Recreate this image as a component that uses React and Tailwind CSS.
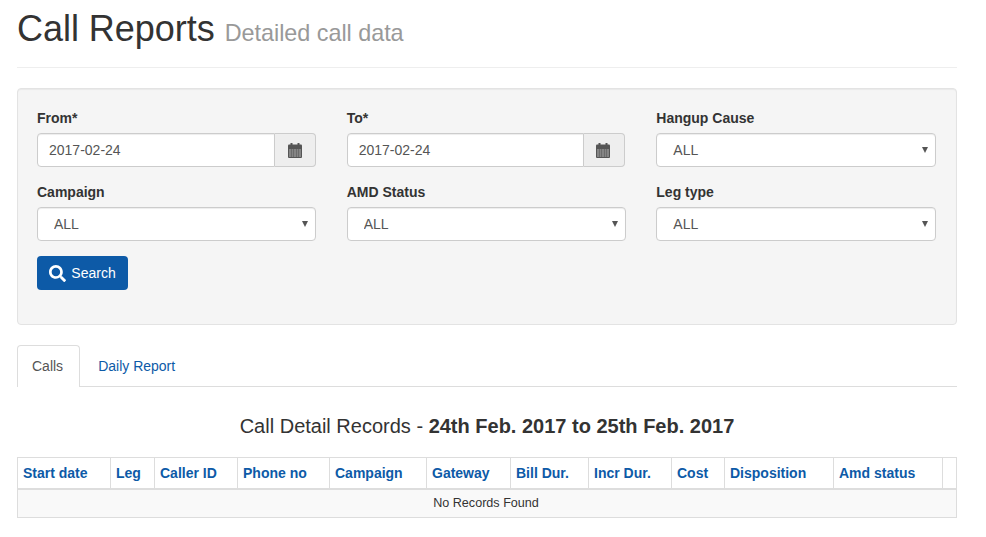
import { FaSearch } from 'react-icons/fa';

const COLUMNS = [
  ['Start date', 93],
  ['Leg', 44],
  ['Caller ID', 83],
  ['Phone no', 92],
  ['Campaign', 97],
  ['Gateway', 84],
  ['Bill Dur.', 78],
  ['Incr Dur.', 83],
  ['Cost', 53],
  ['Disposition', 109],
  ['Amd status', 109],
  ['', 14],
];

const CAL_X = [1, 3.5, 6, 8.5, 11];
const CAL_Y = [6.5, 8.5, 10.5, 12.5];

function CalendarIcon() {
  return (
    <svg width="14" height="15" viewBox="0 0 14 15" fill="#555">
      <rect x="2.500" y="0" width="2" height="3" />
      <rect x="9.500" y="0" width="2" height="3" />
      <rect x="0" y="1.500" width="14" height="13.500" rx="1" />
      {CAL_Y.map((y) =>
        CAL_X.map((x) => <rect key={`${x}-${y}`} x={x} y={y} width="2" height="1" fill="#b5b5b5" />)
      )}
    </svg>
  );
}

function DateField({ label, value, className }) {
  return (
    <div>
      <label className="mb-[5px] block text-sm leading-5 font-bold text-[#333]">{label}</label>
      <div className={`flex h-[34px] ${className}`}>
        <input
          readOnly
          value={value}
          className="h-full min-w-0 flex-1 rounded-l border border-[#ccc] bg-white px-[11px] text-sm text-[#555] shadow-[inset_0_1px_1px_rgba(0,0,0,0.075)] outline-none"
        />
        <span className="flex h-full w-[41px] items-center justify-center rounded-r border border-l-0 border-[#ccc] bg-[#eee] pr-[1px]">
          <CalendarIcon />
        </span>
      </div>
    </div>
  );
}

function SelectField({ label }) {
  return (
    <div>
      <label className="mb-[5px] block text-sm leading-5 font-bold text-[#333]">{label}</label>
      <div className="relative">
        <select className="block h-[34px] w-full appearance-none rounded border border-[#ccc] bg-white pr-3 pl-4 text-sm text-[#555] shadow-[inset_0_1px_1px_rgba(0,0,0,0.075)] outline-none">
          <option>ALL</option>
        </select>
        <svg className="pointer-events-none absolute top-[14px] right-[8px]" width="6" height="6" viewBox="0 0 6 6" fill="#555">
          <path d="M0 0h6L3 6z" />
        </svg>
      </div>
    </div>
  );
}

export default function App() {
  return (
    <div className="h-[537px] w-[986px] overflow-hidden bg-white pl-[17px] font-['Liberation_Sans',Arial,sans-serif] text-sm text-[#333]">
      <div className="w-[940px]">
        {/* Header */}
        <div className="h-[68px] border-b border-[#eee] pt-[9px]">
          <h1 className="text-[36px] leading-10 font-medium tracking-[-0.03px] text-[#333]">
            Call Reports <small className="text-[23.4px] leading-none font-normal text-[#999]">Detailed call data</small>
          </h1>
        </div>

        {/* Filters */}
        <div className="mt-5 h-[237px] rounded border border-[#e3e3e3] bg-[#f5f5f5] px-[19px] pt-[19px] shadow-[inset_0_1px_1px_rgba(0,0,0,0.05)]">
          <div className="grid grid-cols-[279.4px_279.4px_279.4px] gap-x-[30.27px] gap-y-[15px]">
            <DateField label="From*" value="2017-02-24" className="w-full" />
            <DateField label="To*" value="2017-02-24" className="w-[278.2px]" />
            <SelectField label="Hangup Cause" />
            <SelectField label="Campaign" />
            <SelectField label="AMD Status" />
            <SelectField label="Leg type" />
          </div>
          <button className="mt-[15px] flex h-[34px] w-[91px] items-center justify-center gap-[5px] rounded bg-[#0d5aa7] text-sm text-white">
            <FaSearch className="h-[17px] w-[17px]" />
            Search
          </button>
        </div>

        {/* Tabs */}
        <div className="mt-5 flex h-[42px] border-b border-[#ddd]">
          <div className="h-[42px] rounded-t border border-b-0 border-[#ddd] bg-white py-[10px] pr-[16px] pl-[14px] leading-5 text-[#555]">Calls</div>
          <div className="ml-[2px] px-4 pt-[11px] leading-5 text-[#0d5aa7]">Daily Report</div>
        </div>

        {/* Records */}
        <h3 className="mt-[26px] text-center text-xl leading-[26px] font-normal text-[#333]">
          Call Detail Records - <b>24th Feb. 2017 to 25th Feb. 2017</b>
        </h3>
        <table className="mt-[18px] w-[939px] table-fixed border-collapse border border-[#ddd]">
          <colgroup>
            {COLUMNS.map(([name, width], i) => (
              <col key={i} style={{ width }} />
            ))}
          </colgroup>
          <thead>
            <tr>
              {COLUMNS.map(([name], i) => (
                <th key={i} className="h-[31px] border border-b-2 border-[#ddd] px-[5px] text-left text-sm font-bold whitespace-nowrap text-[#0d5aa7]">
                  {name}
                </th>
              ))}
            </tr>
          </thead>
          <tbody>
            <tr>
              <td colSpan={12} className="h-[29px] border border-[#ddd] bg-[#f9f9f9] pt-[1px] pr-[2px] text-center text-[12.6px] text-[#333]">
                No Records Found
              </td>
            </tr>
          </tbody>
        </table>
      </div>
    </div>
  );
}
